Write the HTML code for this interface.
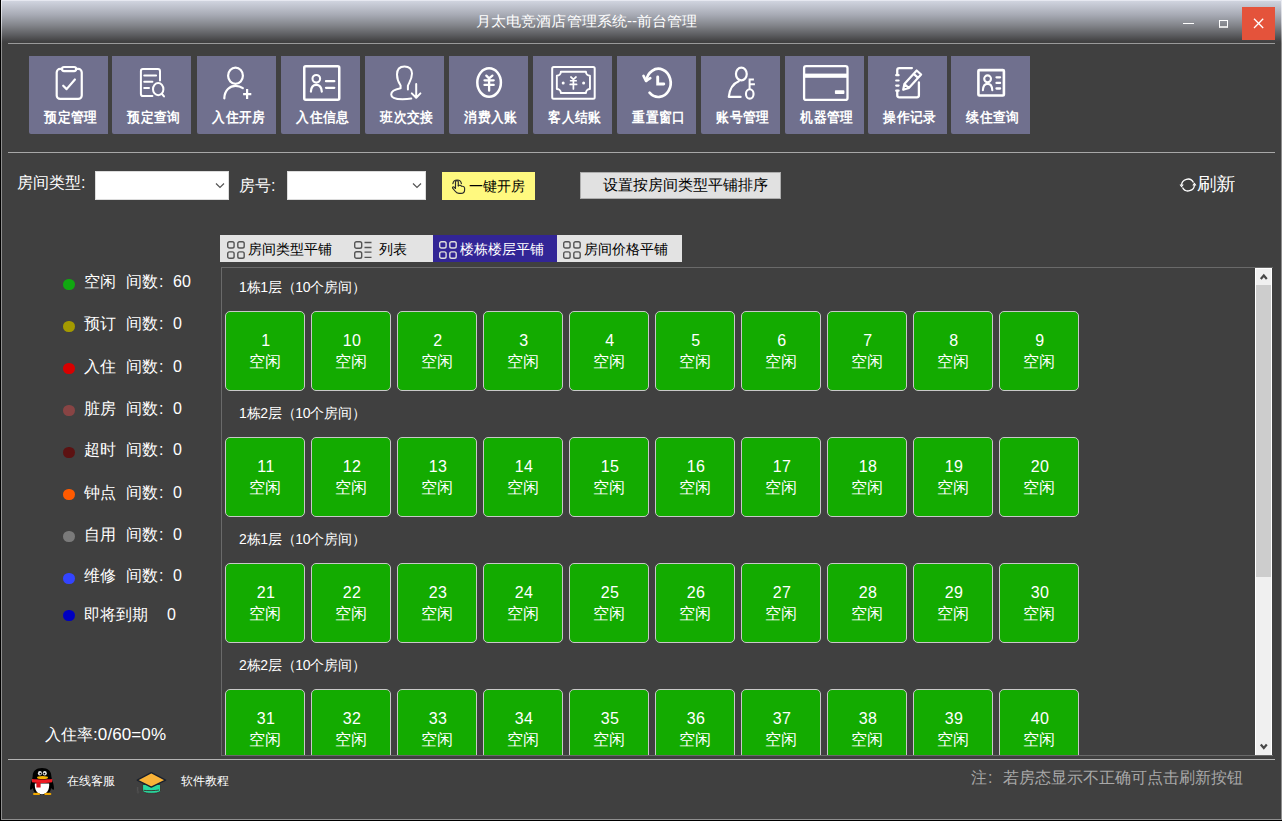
<!DOCTYPE html>
<html><head><meta charset="utf-8">
<style>
*{box-sizing:border-box;margin:0;padding:0}
html,body{width:1282px;height:821px;overflow:hidden;background:#404040;font-family:"Liberation Sans",sans-serif;color:#fff}
.a{position:absolute}
.t{position:absolute;white-space:nowrap;line-height:1}
#title{left:1px;top:0;width:1281px;height:43px;background:linear-gradient(#e6e8f0 0,#e6e8f0 1px,#d0d4df 1px,#a7aab4 15px,#84868c 25px,#5c5d60 35px,#434344 41px,#404040 43px)}
.hl{position:absolute;height:1px;background:#9a9a9a}
.btn{position:absolute;top:56px;width:79px;height:78px;background:#70708e;border-bottom-left-radius:2px}
.btn .lbl{position:absolute;left:2.5px;width:79px;top:54px;text-align:center;font-size:13px;font-weight:bold;line-height:1;letter-spacing:0.3px;transform:scaleY(1.1);transform-origin:0 0}
.btn svg{position:absolute;left:0;top:0}
.combo{position:absolute;top:171px;height:29px;background:#fff;border:1px solid #dcdcdc}
.tile{position:absolute;width:80px;height:80px;background:#13ab00;border:1px solid #c8c8c8;border-radius:5px;color:#fff;font-size:16px;text-align:center}
.tile .n{position:absolute;left:1px;width:78px;letter-spacing:0.4px;top:21px;line-height:1}
.tile .s{position:absolute;left:0;width:78px;top:42px;line-height:1}
.flab{position:absolute;font-size:14px;line-height:1;letter-spacing:-0.25px}
.dot{position:absolute;left:63px;width:11.5px;height:11.5px;border-radius:50%}
.leg{position:absolute;left:84px;font-size:16px;line-height:1}
</style></head><body>
<!-- frame -->
<div class="a" style="left:0;top:0;width:1px;height:821px;background:#000"></div>
<div class="a" style="left:1px;top:0;width:1px;height:820px;background:#8e8e8e"></div>
<div class="a" style="left:1281px;top:0;width:1px;height:820px;background:#8e8e8e"></div>
<div class="a" style="left:0;top:820px;width:1282px;height:1px;background:#000"></div>
<div class="a" style="left:1px;top:819px;width:1281px;height:1px;background:#8e8e8e"></div>
<div id="title" class="a"></div>
<div class="a" style="left:1px;top:1px;width:1px;height:42px;background:linear-gradient(#eceef4,#d0d2d8 50%,#909090)"></div>
<div class="a" style="left:1281px;top:1px;width:1px;height:42px;background:linear-gradient(#eceef4,#d0d2d8 50%,#909090)"></div>
<div class="t" style="left:476px;top:14.3px;font-size:15px;color:#fff;letter-spacing:0.1px;transform:scaleY(0.93);transform-origin:0 0">月太电竞酒店管理系统--前台管理</div>
<div class="hl" style="left:8px;top:43px;width:1267px"></div>
<!-- toolbar -->
<div class="btn" style="left:29px"><svg width="79" height="78" viewBox="0 0 79 78" fill="none" stroke="#fff" stroke-width="2.3" stroke-linecap="round" stroke-linejoin="round"><rect x="27.7" y="12.95" width="25.05" height="29.95" rx="3.5" stroke-width="2.2"/><rect x="33" y="11" width="14.15" height="4.1" rx="2.05" fill="#70708e" stroke-width="2.2"/><path d="M34.2,29.7 L37.6,33.1 L45.9,23.5" stroke-width="2.2"/></svg><div class="lbl">预定管理</div></div>
<div class="btn" style="left:112px"><svg width="79" height="78" viewBox="0 0 79 78" fill="none" stroke="#fff" stroke-width="2.3" stroke-linecap="round" stroke-linejoin="round"><path d="M40.4,40.1 L31,40.1 Q28.9,40.1 28.9,38 L28.9,15.2 Q28.9,13.1 31,13.1 L45.9,13.1 Q48,13.1 48,15.2 L48,24.6" stroke-width="2"/><path d="M32.2,19.4 L44.1,19.4 M32.2,25.7 L40.4,25.7 M32.2,32.1 L37,32.1" stroke-width="2"/><ellipse cx="46.2" cy="33.15" rx="5.2" ry="6.1" stroke-width="2"/><path d="M50,38 L52,40.4" stroke-width="2"/></svg><div class="lbl">预定查询</div></div>
<div class="btn" style="left:197px"><svg width="79" height="78" viewBox="0 0 79 78" fill="none" stroke="#fff" stroke-width="2.3" stroke-linecap="round" stroke-linejoin="round"><ellipse cx="38.5" cy="19.75" rx="7.4" ry="8.05" stroke-width="2.2"/><path d="M27.3,42.4 C27.5,34 33,29.9 38.5,29.9 C41.5,29.9 44,30.8 45.8,32.2" stroke-width="2.2"/><path d="M46.1,38.1 L54.3,38.1 M50.1,33 L50.1,43.1" stroke-width="2.2" stroke-linecap="butt"/></svg><div class="lbl">入住开房</div></div>
<div class="btn" style="left:281px"><svg width="79" height="78" viewBox="0 0 79 78" fill="none" stroke="#fff" stroke-width="2.3" stroke-linecap="round" stroke-linejoin="round"><rect x="23.25" y="10.15" width="35" height="33.6" rx="1.5" stroke-width="2.5"/><circle cx="35.3" cy="22.8" r="3.8" stroke-width="2.1"/><path d="M29.9,35.6 C30.1,31.2 32.4,28.8 35.3,28.8 C38.2,28.8 40.5,31.2 40.8,35.6" stroke-width="2.2"/><path d="M45,25.2 L53.3,25.2 M45,31.8 L53.3,31.8" stroke-width="2.3"/></svg><div class="lbl">入住信息</div></div>
<div class="btn" style="left:365px"><svg width="79" height="78" viewBox="0 0 79 78" fill="none" stroke="#fff" stroke-width="2.3" stroke-linecap="round" stroke-linejoin="round"><path d="M42.9,33.4 L42.9,29.8 C43.6,27.3 47,23.5 47,17.5 C47,12.8 44,10.4 39.5,10.4 C34.5,10.4 32,13.5 32,18.5 C32,22.5 33.5,26.5 35.6,29.5 L35.6,32.3 C30,33.3 26.2,35 26.2,38.5 C26.2,42 31,43.3 37.5,43.3 C41,43.3 44,43 46.3,42.6" stroke-width="2"/><path d="M51.2,28 L51.2,41.6 M46.8,37.4 L51.2,41.8 L55.4,37.4" stroke-width="2"/></svg><div class="lbl">班次交接</div></div>
<div class="btn" style="left:449px"><svg width="79" height="78" viewBox="0 0 79 78" fill="none" stroke="#fff" stroke-width="2.3" stroke-linecap="round" stroke-linejoin="round"><ellipse cx="40.1" cy="26.55" rx="11.8" ry="14.2" stroke-width="2.5"/><path d="M37.3,19.6 L40.1,22.4 L43.4,19.6 M35.5,24.3 L44.7,24.3 M35.5,28.9 L44.7,28.9 M40.1,22.4 L40.1,34.7" stroke-width="2.3"/></svg><div class="lbl">消费入账</div></div>
<div class="btn" style="left:533px"><svg width="79" height="78" viewBox="0 0 79 78" fill="none" stroke="#fff" stroke-width="2.3" stroke-linecap="round" stroke-linejoin="round"><rect x="19.2" y="11" width="42.5" height="31.8" rx="1.5" stroke-width="2"/><path d="M27.85,15.75 L52.95,15.75 A4,4 0 0 0 56.95,19.75 L56.95,32.95 A4,4 0 0 0 52.95,36.95 L27.85,36.95 A4,4 0 0 0 23.85,32.95 L23.85,19.75 A4,4 0 0 0 27.85,15.75 Z" stroke-width="1.9"/><path d="M37.9,21 L40.4,23.3 L43,21 M37.6,24.75 L43.2,24.75 M37.2,28.4 L43.6,28.4 M40.4,23.3 L40.4,33" stroke-width="1.7"/><circle cx="30.2" cy="26.9" r="1.5" fill="#fff" stroke="none"/><circle cx="50.6" cy="26.9" r="1.5" fill="#fff" stroke="none"/></svg><div class="lbl">客人结账</div></div>
<div class="btn" style="left:617px"><svg width="79" height="78" viewBox="0 0 79 78" fill="none" stroke="#fff" stroke-width="2.3" stroke-linecap="round" stroke-linejoin="round"><path d="M32.55,36.69 A12.3,14.1 0 1 0 29.22,24.94" stroke-width="2.7"/><path d="M26.5,19.9 L29,24.8 L33.3,22.2" stroke-width="2.6"/><path d="M40.7,21 L40.7,28 L46.8,28" stroke-width="2.9" stroke-linejoin="miter"/></svg><div class="lbl">重置窗口</div></div>
<div class="btn" style="left:701px"><svg width="79" height="78" viewBox="0 0 79 78" fill="none" stroke="#fff" stroke-width="2.3" stroke-linecap="round" stroke-linejoin="round"><ellipse cx="40.35" cy="18.05" rx="5.4" ry="6.35" stroke-width="2.2"/><path d="M37.8,25.2 C32,27.5 28.5,34 27.8,40.9 L39.6,40.9" stroke-width="2.2"/><ellipse cx="48.75" cy="37.9" rx="3.8" ry="4.7" stroke-width="2.1"/><path d="M48.6,33.2 L48.6,22.6 M48.6,23.5 L52.9,23.5 M48.6,28.2 L53.9,28.2" stroke-width="2" stroke-linecap="butt"/></svg><div class="lbl">账号管理</div></div>
<div class="btn" style="left:785px"><svg width="79" height="78" viewBox="0 0 79 78" fill="none" stroke="#fff" stroke-width="2.3" stroke-linecap="round" stroke-linejoin="round"><rect x="19.1" y="10.1" width="43.4" height="33.8" rx="2" stroke-width="2.3"/><rect x="19" y="17.6" width="43.6" height="4.2" fill="#fff" stroke="none"/><rect x="49.9" y="34.2" width="9.5" height="3.8" rx="0.8" fill="#fff" stroke="none"/></svg><div class="lbl">机器管理</div></div>
<div class="btn" style="left:868px"><svg width="79" height="78" viewBox="0 0 79 78" fill="none" stroke="#fff" stroke-width="2.3" stroke-linecap="round" stroke-linejoin="round"><path d="M43.9,12.1 L31.3,12.1 Q29.25,12.1 29.25,14.1 L29.25,18.5 M29.25,34.8 L29.25,39.3 Q29.25,41.3 31.3,41.3 L48.9,41.3 Q50.9,41.3 50.9,39.3 L50.9,26.5" stroke-width="2.3"/><path d="M28.2,19.15 L30.6,19.15 M28.2,24.5 L30.6,24.5 M28.2,29.6 L30.6,29.6 M28.2,34.7 L30.6,34.7" stroke-width="2.2"/><path d="M35.2,33.8 L36.38,28.05 L48.67,14.49 L53.13,18.51 L40.84,32.07 Z M45.66,17.83 L50.12,21.85 M36.38,28.05 L40.84,32.07" stroke-width="2.2"/></svg><div class="lbl">操作记录</div></div>
<div class="btn" style="left:951px"><svg width="79" height="78" viewBox="0 0 79 78" fill="none" stroke="#fff" stroke-width="2.3" stroke-linecap="round" stroke-linejoin="round"><rect x="27.4" y="14.1" width="25.5" height="25.4" rx="1" stroke-width="2.6"/><circle cx="36.6" cy="22.8" r="3.4" stroke-width="2.1"/><path d="M31.9,34.3 C32.1,30.3 34.1,27.9 36.6,27.9 C39.1,27.9 41.1,30.3 41.3,34.3" stroke-width="2.1"/><path d="M45.5,21.3 L49.1,21.3 M45.5,26.9 L49.1,26.9 M45.5,32.5 L49.1,32.5" stroke-width="2.3"/></svg><div class="lbl">续住查询</div></div>
<div class="hl" style="left:8px;top:152px;width:1267px;background:#a8a8a8"></div>
<!-- window buttons -->
<div class="a" style="left:1183px;top:23px;width:11px;height:1px;background:#fff"></div>
<div class="a" style="left:1219px;top:20px;width:9px;height:8px;border:1px solid #fff;border-bottom:2px solid #e0e0e0"></div>
<div class="a" style="left:1242px;top:7px;width:33px;height:33px;background:#e4533b"></div>
<svg class="a" style="left:1242px;top:7px" width="33" height="33"><path d="M12,11.8 L21.2,21 M21.2,11.8 L12,21" stroke="#fff" stroke-width="1.3"/></svg>
<!-- filter row -->
<div class="t" style="left:17px;top:175px;font-size:16px">房间类型:</div>
<div class="combo" style="left:95px;width:134px"><svg class="a" style="left:119px;top:10px" width="10" height="7"><path d="M1,1.5 L5,5.5 L9,1.5" fill="none" stroke="#555" stroke-width="1.2"/></svg></div>
<div class="t" style="left:239px;top:178px;font-size:16px">房号:</div>
<div class="combo" style="left:287px;width:139px"><svg class="a" style="left:124px;top:10px" width="10" height="7"><path d="M1,1.5 L5,5.5 L9,1.5" fill="none" stroke="#555" stroke-width="1.2"/></svg></div>
<div class="a" style="left:442px;top:172px;width:93px;height:28px;background:#fff97f"></div>
<svg class="a" style="left:450px;top:176px" width="18" height="20" viewBox="0 0 18 20"><g fill="none" stroke="#2a2a2a" stroke-width="1.15" stroke-linecap="round" stroke-linejoin="round"><path d="M2.9,7.6 A4.3,4.3 0 0 1 11.4,7.6"/><path d="M5.5,11.5 L5.5,5.8 C5.5,4.3 8.3,4.3 8.3,5.8 L8.3,10"/><path d="M8.3,9.6 C9.5,9.1 11,9.3 11.5,10.3 C12.8,10.1 14.3,10.7 14.6,11.9 L14.6,14 C14.6,16.5 13,17.4 11,17.4 L9,17.4 C7,17.4 6,16.5 5,15 L2.6,12.2 C2.1,11.2 3.3,10.4 4.2,11.1 L5.5,12.5"/></g></svg>
<div class="t" style="left:469px;top:179px;font-size:14px;color:#000">一键开房</div>
<div class="a" style="left:580px;top:172px;width:201px;height:27px;background:#e1e1e1;border:1px solid #adadad"></div>
<div class="t" style="left:603px;top:177.5px;font-size:14.6px;color:#000">设置按房间类型平铺排序</div>
<svg class="a" style="left:1179px;top:176px" width="18" height="18" viewBox="0 0 18 18"><path d="M2.6,9.5 A6.3,6.3 0 0 1 14.5,6.5 M15.4,8.5 A6.3,6.3 0 0 1 3.5,11.5" fill="none" stroke="#fff" stroke-width="1.3"/><path d="M1,8.5 L2.6,10.5 L4.2,8.5 M13.8,9.5 L15.4,7.5 L17,9.5" fill="none" stroke="#fff" stroke-width="1.1"/></svg>
<div class="t" style="left:1197px;top:174.5px;font-size:19.3px;transform:scaleY(0.92);transform-origin:0 0">刷新</div>
<!-- tabs -->
<div class="a" style="left:220px;top:235px;width:462px;height:27px;background:#e3e3e3"></div>
<div class="a" style="left:220px;top:235px;width:127px;height:27px"><svg class="a" width="18" height="18" viewBox="0 0 18 18" style="top:6px;left:7px"><g fill="none" stroke="#555" stroke-width="1.4"><rect x="0.7" y="0.7" width="6.4" height="6.3" rx="1.8"/><rect x="10.8" y="0.7" width="6.4" height="6.3" rx="1.8"/><rect x="0.7" y="10.9" width="6.4" height="6.3" rx="1.8"/><rect x="10.8" y="10.9" width="6.4" height="6.3" rx="1.8"/></g></svg><div class="t" style="left:28px;top:7px;font-size:14px;color:#000">房间类型平铺</div></div>
<div class="a" style="left:347px;top:235px;width:86px;height:27px"><svg class="a" width="18" height="18" viewBox="0 0 18 18" style="top:6px;left:7px"><g fill="none" stroke="#555" stroke-width="1.4"><rect x="0.7" y="0.7" width="7" height="6.5" rx="1.8"/><rect x="0.7" y="10.7" width="7" height="6.5" rx="1.8"/><path d="M10.5,1.5 L17.5,1.5 M10.5,6.5 L17.5,6.5 M10.5,11.2 L17.5,11.2 M10.5,16.3 L17.5,16.3" stroke-width="1.3"/></g></svg><div class="t" style="left:32px;top:7px;font-size:14px;color:#000">列表</div></div>
<div class="a" style="left:433px;top:235px;width:124px;height:27px;background:#322596"><svg class="a" width="18" height="18" viewBox="0 0 18 18" style="top:6px;left:6px"><g fill="none" stroke="#ddd" stroke-width="1.4"><rect x="0.7" y="0.7" width="6.4" height="6.3" rx="1.8"/><rect x="10.8" y="0.7" width="6.4" height="6.3" rx="1.8"/><rect x="0.7" y="10.9" width="6.4" height="6.3" rx="1.8"/><rect x="10.8" y="10.9" width="6.4" height="6.3" rx="1.8"/></g></svg><div class="t" style="left:27px;top:7px;font-size:14px;color:#fff">楼栋楼层平铺</div></div>
<div class="a" style="left:557px;top:235px;width:125px;height:27px"><svg class="a" width="18" height="18" viewBox="0 0 18 18" style="top:6px;left:6px"><g fill="none" stroke="#555" stroke-width="1.4"><rect x="0.7" y="0.7" width="6.4" height="6.3" rx="1.8"/><rect x="10.8" y="0.7" width="6.4" height="6.3" rx="1.8"/><rect x="0.7" y="10.9" width="6.4" height="6.3" rx="1.8"/><rect x="10.8" y="10.9" width="6.4" height="6.3" rx="1.8"/></g></svg><div class="t" style="left:27px;top:7px;font-size:14px;color:#000">房间价格平铺</div></div>
<!-- legend -->
<div class="dot" style="top:278.75px;background:#10a810"></div><div class="leg" style="top:274px">空闲</div><div class="leg" style="left:126px;top:274px">间数<span style="margin-left:1px">:</span><span style="position:absolute;left:47px">60</span></div>
<div class="dot" style="top:320.95px;background:#a49a00"></div><div class="leg" style="top:316px">预订</div><div class="leg" style="left:126px;top:316px">间数<span style="margin-left:1px">:</span><span style="position:absolute;left:47px">0</span></div>
<div class="dot" style="top:362.75px;background:#d80000"></div><div class="leg" style="top:359px">入住</div><div class="leg" style="left:126px;top:359px">间数<span style="margin-left:1px">:</span><span style="position:absolute;left:47px">0</span></div>
<div class="dot" style="top:404.85px;background:#884444"></div><div class="leg" style="top:401px">脏房</div><div class="leg" style="left:126px;top:401px">间数<span style="margin-left:1px">:</span><span style="position:absolute;left:47px">0</span></div>
<div class="dot" style="top:446.65px;background:#5c1212"></div><div class="leg" style="top:442px">超时</div><div class="leg" style="left:126px;top:442px">间数<span style="margin-left:1px">:</span><span style="position:absolute;left:47px">0</span></div>
<div class="dot" style="top:488.75px;background:#ff5a00"></div><div class="leg" style="top:485px">钟点</div><div class="leg" style="left:126px;top:485px">间数<span style="margin-left:1px">:</span><span style="position:absolute;left:47px">0</span></div>
<div class="dot" style="top:530.75px;background:#7a7a7a"></div><div class="leg" style="top:527px">自用</div><div class="leg" style="left:126px;top:527px">间数<span style="margin-left:1px">:</span><span style="position:absolute;left:47px">0</span></div>
<div class="dot" style="top:572.75px;background:#3344ff"></div><div class="leg" style="top:568px">维修</div><div class="leg" style="left:126px;top:568px">间数<span style="margin-left:1px">:</span><span style="position:absolute;left:47px">0</span></div>
<div class="dot" style="top:609.75px;background:#0000c0"></div><div class="leg" style="top:607px">即将到期</div><div class="leg" style="left:167px;top:607px">0</div>
<div class="leg" style="left:45px;top:726px">入住率<span style="font-size:17px;letter-spacing:0.1px;position:relative;top:-0.5px">:0/60=0%</span></div>
<!-- panel -->
<div class="a" style="left:221px;top:267px;width:1052px;height:489px;border:1px solid #6a6a6a;border-right:none;overflow:hidden">
<div class="flab" style="left:17px;top:calc(13px - 1px)">1栋1层（10个房间）</div>
<div class="tile" style="left:3px;top:43px"><div class="n">1</div><div class="s">空闲</div></div>
<div class="tile" style="left:89px;top:43px"><div class="n">10</div><div class="s">空闲</div></div>
<div class="tile" style="left:175px;top:43px"><div class="n">2</div><div class="s">空闲</div></div>
<div class="tile" style="left:261px;top:43px"><div class="n">3</div><div class="s">空闲</div></div>
<div class="tile" style="left:347px;top:43px"><div class="n">4</div><div class="s">空闲</div></div>
<div class="tile" style="left:433px;top:43px"><div class="n">5</div><div class="s">空闲</div></div>
<div class="tile" style="left:519px;top:43px"><div class="n">6</div><div class="s">空闲</div></div>
<div class="tile" style="left:605px;top:43px"><div class="n">7</div><div class="s">空闲</div></div>
<div class="tile" style="left:691px;top:43px"><div class="n">8</div><div class="s">空闲</div></div>
<div class="tile" style="left:777px;top:43px"><div class="n">9</div><div class="s">空闲</div></div>
<div class="flab" style="left:17px;top:calc(139px - 1px)">1栋2层（10个房间）</div>
<div class="tile" style="left:3px;top:169px"><div class="n">11</div><div class="s">空闲</div></div>
<div class="tile" style="left:89px;top:169px"><div class="n">12</div><div class="s">空闲</div></div>
<div class="tile" style="left:175px;top:169px"><div class="n">13</div><div class="s">空闲</div></div>
<div class="tile" style="left:261px;top:169px"><div class="n">14</div><div class="s">空闲</div></div>
<div class="tile" style="left:347px;top:169px"><div class="n">15</div><div class="s">空闲</div></div>
<div class="tile" style="left:433px;top:169px"><div class="n">16</div><div class="s">空闲</div></div>
<div class="tile" style="left:519px;top:169px"><div class="n">17</div><div class="s">空闲</div></div>
<div class="tile" style="left:605px;top:169px"><div class="n">18</div><div class="s">空闲</div></div>
<div class="tile" style="left:691px;top:169px"><div class="n">19</div><div class="s">空闲</div></div>
<div class="tile" style="left:777px;top:169px"><div class="n">20</div><div class="s">空闲</div></div>
<div class="flab" style="left:17px;top:calc(265px - 1px)">2栋1层（10个房间）</div>
<div class="tile" style="left:3px;top:295px"><div class="n">21</div><div class="s">空闲</div></div>
<div class="tile" style="left:89px;top:295px"><div class="n">22</div><div class="s">空闲</div></div>
<div class="tile" style="left:175px;top:295px"><div class="n">23</div><div class="s">空闲</div></div>
<div class="tile" style="left:261px;top:295px"><div class="n">24</div><div class="s">空闲</div></div>
<div class="tile" style="left:347px;top:295px"><div class="n">25</div><div class="s">空闲</div></div>
<div class="tile" style="left:433px;top:295px"><div class="n">26</div><div class="s">空闲</div></div>
<div class="tile" style="left:519px;top:295px"><div class="n">27</div><div class="s">空闲</div></div>
<div class="tile" style="left:605px;top:295px"><div class="n">28</div><div class="s">空闲</div></div>
<div class="tile" style="left:691px;top:295px"><div class="n">29</div><div class="s">空闲</div></div>
<div class="tile" style="left:777px;top:295px"><div class="n">30</div><div class="s">空闲</div></div>
<div class="flab" style="left:17px;top:calc(391px - 1px)">2栋2层（10个房间）</div>
<div class="tile" style="left:3px;top:421px"><div class="n">31</div><div class="s">空闲</div></div>
<div class="tile" style="left:89px;top:421px"><div class="n">32</div><div class="s">空闲</div></div>
<div class="tile" style="left:175px;top:421px"><div class="n">33</div><div class="s">空闲</div></div>
<div class="tile" style="left:261px;top:421px"><div class="n">34</div><div class="s">空闲</div></div>
<div class="tile" style="left:347px;top:421px"><div class="n">35</div><div class="s">空闲</div></div>
<div class="tile" style="left:433px;top:421px"><div class="n">36</div><div class="s">空闲</div></div>
<div class="tile" style="left:519px;top:421px"><div class="n">37</div><div class="s">空闲</div></div>
<div class="tile" style="left:605px;top:421px"><div class="n">38</div><div class="s">空闲</div></div>
<div class="tile" style="left:691px;top:421px"><div class="n">39</div><div class="s">空闲</div></div>
<div class="tile" style="left:777px;top:421px"><div class="n">40</div><div class="s">空闲</div></div>
</div>
<!-- scrollbar -->
<div class="a" style="left:1255px;top:268px;width:17px;height:487px;background:#f0f0f0;border:1px solid #fff;border-bottom:none"></div>
<div class="a" style="left:1256px;top:285px;width:15px;height:292px;background:#cdcdcd"></div>
<svg class="a" style="left:1256px;top:268px" width="16" height="17"><path d="M4.8,11 L7.8,7.5 L10.8,11" fill="none" stroke="#484848" stroke-width="2.2"/></svg>
<svg class="a" style="left:1256px;top:738px" width="16" height="17"><path d="M4.8,6.5 L7.8,10 L10.8,6.5" fill="none" stroke="#484848" stroke-width="2.2"/></svg>
<!-- footer -->
<div class="hl" style="left:8px;top:759px;width:1267px;background:#b4b4b4"></div>
<svg class="a" style="left:26px;top:762px" width="34" height="38" viewBox="0 0 34 38">
<path d="M16,6 C22,6 25.3,9 25.3,14 L26,18 C27.5,21 28,24.5 28,27 C28,28 27,28 26,27 L25,26 C24.5,31 21,32.5 16,32.5 C11,32.5 7.5,31 7,26 L6,27 C5,28 4,28 4,27 C4,24.5 4.5,21 6,18 L6.7,14 C6.7,9 10,6 16,6 Z" fill="#000"/>
<path d="M8.8,21.5 C8.5,28 11,32.2 16,32.2 C21,32.2 23.5,28 23.2,21.5 Z" fill="#fff"/>
<ellipse cx="13.9" cy="11.3" rx="2" ry="2.3" fill="#e8e8e8"/><ellipse cx="18.75" cy="11.3" rx="2" ry="2.3" fill="#e8e8e8"/>
<circle cx="14.4" cy="11.6" r="0.9" fill="#000"/><circle cx="18.4" cy="11.6" r="0.9" fill="#000"/>
<ellipse cx="16.5" cy="15.6" rx="5.5" ry="1.5" fill="#f5b400"/>
<path d="M6,17 C10,17.6 22,17.6 26.2,17 L26.2,20.3 C22,21.2 11,21.2 6,20.3 Z" fill="#ef1c24"/>
<rect x="10.4" y="20" width="4.2" height="5.5" fill="#e0101a"/>
<ellipse cx="10.5" cy="31.9" rx="3.6" ry="1.2" fill="#f0a800"/><ellipse cx="21.8" cy="31.9" rx="3.6" ry="1.2" fill="#f0a800"/>
</svg>
<svg class="a" style="left:130px;top:765px" width="42" height="35" viewBox="0 0 42 35">
<path d="M7.6,22 L7.6,27" stroke="#505050" stroke-width="1.5"/><ellipse cx="8" cy="27" rx="1.3" ry="1.5" fill="#4a4a4a"/>
<path d="M12.6,19.5 L12.6,26 C14,28 18,28.3 21.3,28.3 C25,28.3 29,28 30.5,26 L30.5,19.5 Z" fill="#28d79e" stroke="#3a2020" stroke-width="0.7"/>
<path d="M13.5,25.3 C17,25.8 25,25.8 29,25" stroke="#3a2a2a" stroke-width="0.9" fill="none"/>
<path d="M7.2,15.1 L21.3,7.7 L35.6,15.1 L21.3,22.2 Z" fill="#f8b238" stroke="#18202e" stroke-width="1.3" stroke-linejoin="round"/>
</svg>
<div class="t" style="left:67px;top:775px;font-size:12px">在线客服</div>
<div class="t" style="left:181px;top:775px;font-size:12px">软件教程</div>
<div class="t" style="left:971px;top:770px;font-size:16px;color:#a8a8a8">注<span style="margin-left:1px">:</span><span style="position:absolute;left:32px">若房态显示不正确可点击刷新按钮</span></div>
</body></html>
